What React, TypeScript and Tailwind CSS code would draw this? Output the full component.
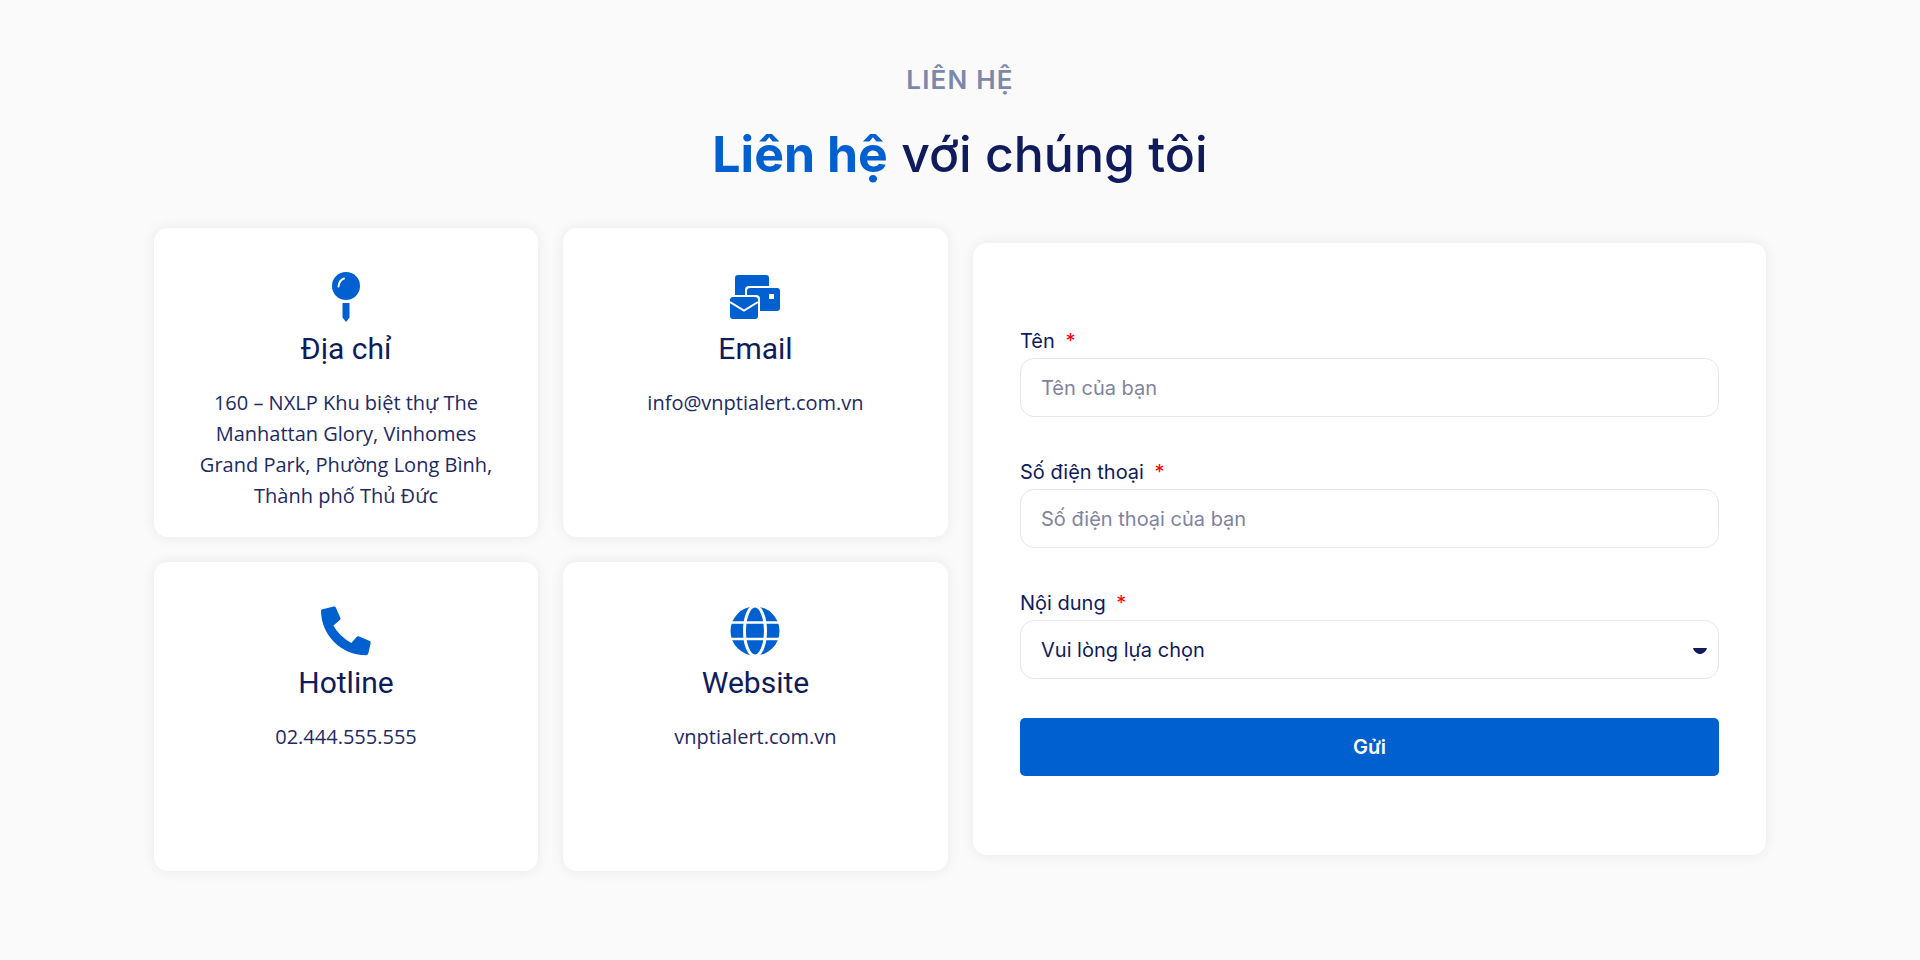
import { ReactNode } from "react";

function PinIcon() {
  return (
    <svg width="28" height="50" viewBox="0 0 28 50" className="block">
      <circle cx="14" cy="14" r="14" fill="#0060d0" />
      <path d="M6.500 14.500C7 10.500 9 7.500 12 6.500" fill="none" stroke="#fff" strokeWidth="2" strokeLinecap="round" />
      <path d="M10.500 31h7v14.500L14 50l-3.500-4.500z" fill="#0060d0" />
    </svg>
  );
}

function MailIcon() {
  return (
    <svg width="50" height="44" viewBox="0 0 50 44" className="block -translate-x-px">
      <rect x="5" y="0" width="34" height="26" rx="3" fill="#0060d0" />
      <rect x="15" y="11" width="37" height="27" rx="4" fill="#fff" />
      <rect x="17" y="13" width="33" height="23" rx="3" fill="#0060d0" />
      <rect x="39" y="19" width="5" height="5" fill="#fff" />
      <rect x="0" y="20" width="30" height="24" rx="4" fill="#fff" />
      <rect x="0" y="22" width="28" height="22" rx="3" fill="#0060d0" />
      <path d="M0 27l14 8.500L28 27" fill="none" stroke="#fff" strokeWidth="2" />
    </svg>
  );
}

function PhoneIcon() {
  return (
    <svg width="50" height="50" viewBox="0 0 50.300 50" className="block">
      <path
        d="M1.500 3L13 .3Q14.500 0 15 1.500L19.500 12Q20 13.200 19 14L12.500 19.500C16 26 23 33 30.500 37L36 30.700Q37 30 38 30.300L49 35Q50.300 35.700 50 37L47.500 48Q47 49.500 45.500 49.500C20 49.500 0 29 0 4.500Q0 3.300 1.500 3z"
        fill="#0060d0"
      />
    </svg>
  );
}

function GlobeIcon() {
  return (
    <svg width="50" height="50" viewBox="0 0 50 50" className="block -translate-x-px">
      <circle cx="25" cy="25" r="24.500" fill="#0060d0" />
      <ellipse cx="25" cy="25" rx="10.500" ry="25" fill="none" stroke="#fff" strokeWidth="3" />
      <path d="M0 16.500h50M0 33h50" stroke="#fff" strokeWidth="2.500" />
    </svg>
  );
}

function InfoCard({ icon, title, lines }: { icon: ReactNode; title: string; lines: string }) {
  return (
    <div className="bg-white rounded-[14px] shadow-[0_0_14px_rgba(0,0,0,0.07)] px-[40px] pt-[44px] text-center">
      <div className="h-[50px] flex items-center justify-center">{icon}</div>
      <h3 className="font-['Roboto',sans-serif] text-[30px] leading-[36px] text-[#0f1b5c] mt-[9px]">{title}</h3>
      <p className="font-['Open_Sans',sans-serif] text-[20px] leading-[31px] text-[#1d2a66] mt-[20px]">{lines}</p>
    </div>
  );
}

function Field({ label, children }: { label: string; children: ReactNode }) {
  return (
    <div>
      <label className="block text-[20px] leading-[24px] text-[#0f1b5c] mb-[5px]">
        {label} <span className="text-[#f00] ml-[5px]">*</span>
      </label>
      {children}
    </div>
  );
}

export default function App() {
  return (
    <div className="bg-[#fafafa] min-h-screen h-[960px] pt-[64px] font-['Inter',sans-serif] overflow-hidden">
      <p className="text-center text-[26px] leading-[32px] font-semibold tracking-[0.045em] text-[#7c88ab]">LIÊN HỆ</p>
      <h1 className="text-center text-[50px] leading-[64px] font-medium text-[#0f1b5c] mt-[26px]">
        <span className="text-[#0060d0] font-bold">Liên hệ</span> với chúng tôi
      </h1>

      <div className="w-[1612px] mx-auto mt-[42px] flex items-start gap-[25px]">
        <div className="grid grid-cols-[384px_385px] grid-rows-[309px_309px] gap-[25px] w-[794px] shrink-0">
          <InfoCard
            icon={<PinIcon />}
            title="Địa chỉ"
            lines="160 – NXLP Khu biệt thự The Manhattan Glory, Vinhomes Grand Park, Phường Long Bình, Thành phố Thủ Đức"
          />
          <InfoCard icon={<MailIcon />} title="Email" lines="info@vnptialert.com.vn" />
          <InfoCard icon={<PhoneIcon />} title="Hotline" lines="02.444.555.555" />
          <InfoCard icon={<GlobeIcon />} title="Website" lines="vnptialert.com.vn" />
        </div>

        <form className="flex-1 h-[612px] mt-[15px] bg-white rounded-[14px] shadow-[0_0_14px_rgba(0,0,0,0.07)] px-[47px] pt-[86px]">
          <div className="flex flex-col gap-[43px]">
            <Field label="Tên">
              <input
                placeholder="Tên của bạn"
                className="w-full h-[59px] px-[20px] text-[20px] bg-white border border-[#e6e7eb] rounded-[14px] outline-none text-[#0f1b5c] placeholder:text-[#7f83a0]"
              />
            </Field>
            <Field label="Số điện thoại">
              <input
                placeholder="Số điện thoại của bạn"
                className="w-full h-[59px] px-[20px] text-[20px] bg-white border border-[#e6e7eb] rounded-[14px] outline-none text-[#0f1b5c] placeholder:text-[#7f83a0]"
              />
            </Field>
            <Field label="Nội dung">
              <div className="relative">
                <select className="w-full h-[59px] px-[20px] text-[20px] bg-white border border-[#e6e7eb] rounded-[14px] outline-none text-[#0f1b5c] appearance-none">
                  <option>Vui lòng lựa chọn</option>
                </select>
                <svg width="14" height="6" viewBox="0 0 14 6" className="absolute right-[12px] top-[28px]">
                  <path d="M0 0h14C13 3.500 10 6 7 6S1 3.500 0 0z" fill="#0f1b5c" />
                </svg>
              </div>
            </Field>
          </div>
          <button
            type="button"
            className="w-full h-[58px] mt-[39px] bg-[#0060d0] rounded-[5px] text-white text-[20px] font-semibold"
          >
            Gửi
          </button>
        </form>
      </div>
    </div>
  );
}
